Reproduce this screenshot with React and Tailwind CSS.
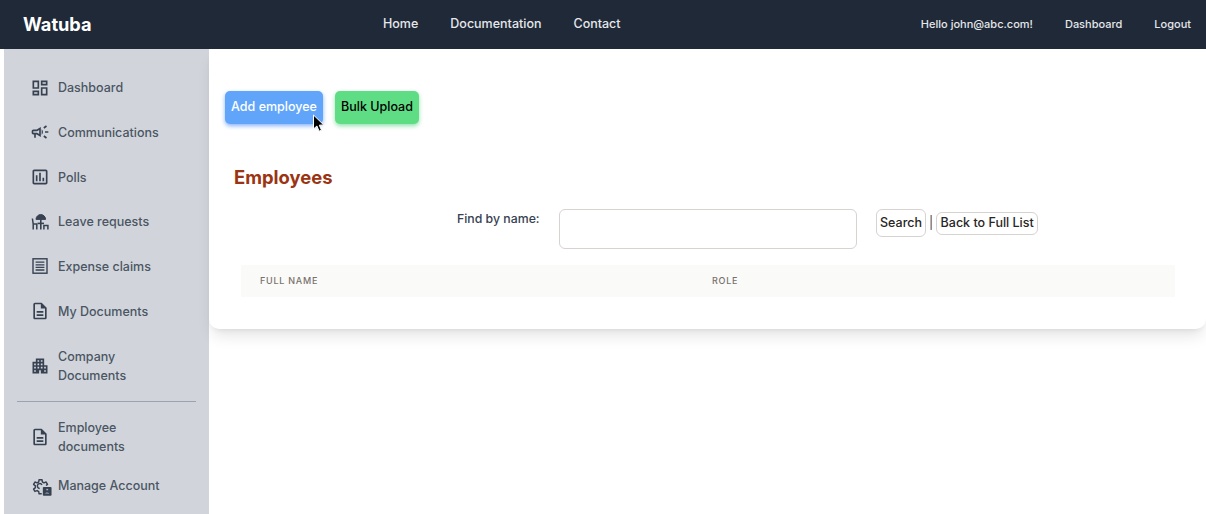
import React from "react";
import { MdOutlineDashboard, MdOutlineCampaign, MdOutlinePoll, MdOutlineDescription, MdApartment } from "react-icons/md";

const DeckIcon = (p) => (
  <svg viewBox="0 0 20 20" width="20" height="20" fill="none" stroke="currentColor" {...p}>
    <path d="M6 7.4a4.8 4.8 0 0 1 9.6 0z" fill="currentColor" strokeWidth="1" strokeLinejoin="round" />
    <path d="M10.8 7.5v10" strokeWidth="1.6" />
    <path d="M7.6 11.4h6.4" strokeWidth="1.6" />
    <path d="M2.4 6.5l.8 5.6h3.6v5.4M3.2 12v5.5" strokeWidth="1.5" />
    <path d="M13.9 17.5v-4h4v4" strokeWidth="1.5" />
  </svg>
);

const ReceiptIcon = (p) => (
  <svg viewBox="0 0 20 20" width="20" height="20" fill="none" stroke="currentColor" {...p}>
    <rect x="3" y="2.8" width="14" height="14.4" strokeWidth="1.4" />
    <path d="M5.6 6.2h8.8M5.6 8.8h8.8M5.6 11.4h8.8M5.6 14h8.8" strokeWidth="1.3" />
  </svg>
);

const GearBoxIcon = (p) => (
  <svg viewBox="0 0 24 24" width="22" height="22" fill="none" stroke="currentColor" {...p}>
    <path d="M12.8 20.5h-2.9l-.4-2.5a6.6 6.6 0 0 1-1.7-1l-2.4.9-1.5-2.5 2-1.6a6 6 0 0 1 0-2l-2-1.6 1.5-2.5 2.4.9a6.6 6.6 0 0 1 1.7-1l.4-2.5h3.2l.4 2.5a6.6 6.6 0 0 1 1.7 1l2.4-.9 1.5 2.5-1.6 1.3" strokeWidth="1.6" strokeLinejoin="round" />
    <path d="M10.6 14.7a2.7 2.7 0 1 1 2.5-4" strokeWidth="1.6" />
    <rect x="14" y="13" width="9.5" height="9.5" rx="1" fill="currentColor" stroke="none" />
    <circle cx="18.7" cy="16" r="1.3" fill="#d1d5db" />
    <path d="M15.9 20.6c.4-1.3 1.5-1.9 2.8-1.9s2.4.6 2.8 1.9z" fill="#d1d5db" />
  </svg>
);

const items = [
  { label: "Dashboard", Icon: MdOutlineDashboard, cls: "py-[12.85px]" },
  { label: "Communications", Icon: MdOutlineCampaign, cls: "py-[12.85px]" },
  { label: "Polls", Icon: MdOutlinePoll, cls: "py-[12.85px]" },
  { label: "Leave requests", Icon: DeckIcon, cls: "py-[12.85px]" },
  { label: "Expense claims", Icon: ReceiptIcon, cls: "py-[12.85px]" },
  { label: "My Documents", Icon: MdOutlineDescription, cls: "py-[12.85px]" },
  { label: ["Company", "Documents"], Icon: MdApartment, cls: "pt-[13.5px] pb-[12.2px]" },
];

const lower = [
  { label: ["Employee", "documents"], Icon: MdOutlineDescription, cls: "pt-[16px] pb-[8px]" },
  { label: "Manage Account", Icon: GearBoxIcon, cls: "pt-[12px] pb-[9px]" },
];

function NavRow({ label, Icon, cls }) {
  return (
    <a className={`flex items-center pl-[26px] text-[12.5px] leading-[19px] font-medium text-[#4b5563] ${cls}`}>
      <span className="flex h-[19px] w-[28px] shrink-0 items-center">
        <Icon size={20} className="text-[#374151]" />
      </span>
      <span className="flex flex-col">
        {Array.isArray(label) ? label.map((l) => <span key={l}>{l}</span>) : label}
      </span>
    </a>
  );
}

export default function App() {
  return (
    <div className="relative h-[514px] w-[1206px] overflow-hidden bg-white font-['Inter',sans-serif]">
      <header className="flex h-[49px] items-center bg-[#1f2937] pl-[23px] pr-[15px]">
        <div className="w-[360px] text-[18.2px] font-bold text-white">Watuba</div>
        <nav className="flex gap-[32px] pb-px text-[12.5px] font-medium text-[#e5e7eb]">
          <a>Home</a>
          <a>Documentation</a>
          <a>Contact</a>
        </nav>
        <div className="ml-auto flex gap-[32px] text-[11px] font-medium text-[#e5e7eb]">
          <span>Hello john@abc.com!</span>
          <a>Dashboard</a>
          <a>Logout</a>
        </div>
      </header>
      <div className="flex">
        <aside className="ml-[4px] h-[465px] w-[205px] shrink-0 bg-[#d1d5db] pt-[16.3px]">
          {items.map((it) => (
            <NavRow key={String(it.label)} {...it} />
          ))}
          <div className="mx-[13px] mt-[4.1px] border-t border-[#9ca3af]" />
          {lower.map((it) => (
            <NavRow key={String(it.label)} {...it} />
          ))}
        </aside>
        <main className="h-[280px] flex-1 rounded-b-[10px] bg-white shadow-lg">
          <div className="flex gap-[12px] pl-[16px] pt-[42px]">
            <button className="h-[33px] w-[98px] rounded-[5px] bg-[#60a5fa] pb-px text-[12.5px] font-medium text-white shadow-[0_2px_4px_rgba(59,130,246,0.6)]">
              Add employee
            </button>
            <button className="h-[33px] w-[84px] rounded-[5px] bg-[#5fdd85] pb-px text-[12.5px] font-medium text-black shadow-[0_2px_4px_rgba(34,197,94,0.5)]">
              Bulk Upload
            </button>
          </div>
          <h1 className="ml-[25px] mt-[41px] text-[18.4px] leading-[24px] font-bold text-[#9a3412]">Employees</h1>
          <div className="mt-[20px] flex items-start">
            <label className="ml-[248px] w-[102px] text-[12.3px] leading-[19px] font-medium text-[#374151]">
              Find by name:
            </label>
            <input className="h-[40px] w-[298px] rounded-[6px] border border-[#d6d3d1]" />
            <div className="ml-[19px] flex h-[28px] items-center text-[12.5px] font-medium text-[#292524]">
              <button className="h-[28px] w-[50px] rounded-[6px] border border-[#d6d3d1]">Search</button>
              <span className="mx-[3px] font-normal text-[#44403c]">|</span>
              <button className="h-[23px] w-[102px] rounded-[6px] border border-[#d6d3d1]">Back to Full List</button>
            </div>
          </div>
          <div className="ml-[32px] mr-[31px] mt-[16px] flex h-[32px] items-center bg-[#fafaf9] pl-[19px] text-[9px] font-medium tracking-[0.75px] text-[#78716c]">
            <span className="w-[452px]">FULL NAME</span>
            <span>ROLE</span>
          </div>
        </main>
      </div>
      <svg className="absolute left-[312px] top-[114px]" width="13" height="19" viewBox="0 0 13 19">
        <path d="M1.5 1v14l3.4-3 2.2 5.2 2.4-1-2.2-5 4.4-.3z" fill="#000" stroke="#fff" strokeWidth="1" />
      </svg>
    </div>
  );
}
